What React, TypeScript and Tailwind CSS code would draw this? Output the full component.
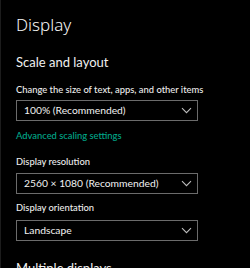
import React from "react";

const Chevron = () => (
  <svg width="11" height="7" viewBox="0 0 11 7" fill="none" className="shrink-0">
    <path d="M1 1.2l4.5 4.5 4.5-4.5" stroke="#bdbdbd" strokeWidth="1.1" />
  </svg>
);

const Select = ({ value }: { value: string }) => (
  <div className="flex items-center justify-between w-[182px] h-[21px] border-[1.5px] border-[#6b6b6b] pl-[7px] pr-[5px]">
    <span className="text-[10.3px] text-[#f2f2f2] leading-none whitespace-nowrap">{value}</span>
    <Chevron />
  </div>
);

const Label = ({ children, className = "" }: { children: React.ReactNode; className?: string }) => (
  <p className={`text-[9.4px] font-medium text-[#ededed] leading-[14px] whitespace-nowrap ${className}`}>
    {children}
  </p>
);

export default function App() {
  return (
    <div
      className="w-[250px] h-[268px] bg-black overflow-hidden border-l border-[#1c1c1c] pl-[15px]"
      style={{ fontFamily: 'Lato, "Noto Sans", sans-serif' }}
    >
      <h1
        className="pt-[14px] text-[17px] font-light text-[#f5f5f5] leading-[22px]"
        style={{ fontFamily: '"Noto Sans", sans-serif' }}
      >
        Display
      </h1>
      <h2 className="mt-[17px] text-[13px] text-[#f0f0f0] leading-[18px] whitespace-nowrap">
        Scale and layout
      </h2>
      <Label className="mt-[12px]">Change the size of text, apps, and other items</Label>
      <div className="mt-[3px]">
        <Select value="100% (Recommended)" />
      </div>
      <p className="mt-[8px] text-[9.4px] font-medium text-[#00a88a] leading-[14px] whitespace-nowrap">
        Advanced scaling settings
      </p>
      <Label className="mt-[12px]">Display resolution</Label>
      <div className="mt-[4px]">
        <Select value="2560 × 1080 (Recommended)" />
      </div>
      <Label className="mt-[7px]">Display orientation</Label>
      <div className="mt-[5px]">
        <Select value="Landscape" />
      </div>
      <h2 className="mt-[18px] text-[13px] text-[#f0f0f0] leading-[18px] whitespace-nowrap">
        Multiple displays
      </h2>
    </div>
  );
}
